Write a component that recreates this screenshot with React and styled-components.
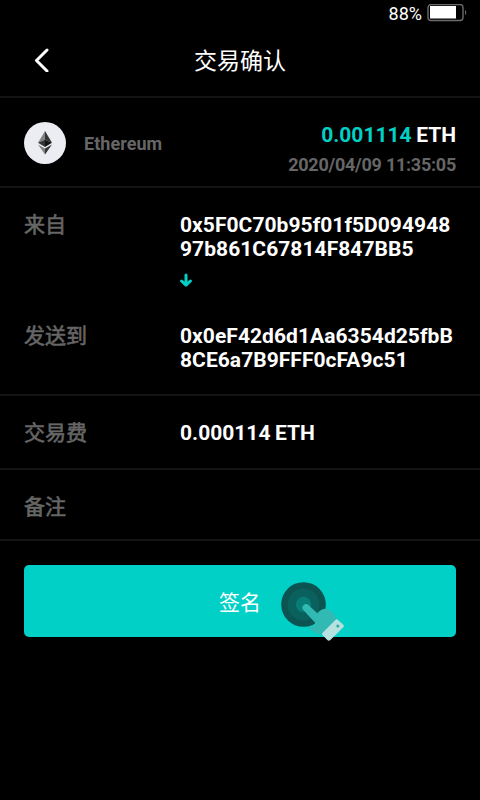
import React from "react";
import styled, { createGlobalStyle } from "styled-components";

const GlobalStyle = createGlobalStyle`
  body {
    margin: 0;
    background-color: #000;
    color: white;
    font-family: Roboto, "Noto Sans CJK SC", sans-serif;
  }
`;

const Screen = styled.div`
  width: 480px;
  min-height: 800px;
  overflow: hidden;
`;

const StatusBar = styled.div`
  display: flex;
  justify-content: flex-end;
  align-items: center;
  gap: 5px;
  height: 26px;
  padding-right: 12px;
  font-size: 18px;
  line-height: 26px;
`;

const Percent = styled.span`
  padding-top: 2px;
`;

const Header = styled.header`
  display: grid;
  grid-template-columns: 60px 1fr 60px;
  align-items: center;
  height: 70px;
  border-bottom: 2px solid #141414;
`;

const BackButton = styled.button`
  display: flex;
  padding: 0 0 2px 34px;
  border: none;
  background: none;
  color: white;
`;

const Title = styled.h1`
  margin: 0;
  padding-top: 1px;
  font-size: 23px;
  font-weight: 400;
  line-height: 34px;
  text-align: center;
`;

const Section = styled.section`
  display: flex;
  align-items: ${(props) => props.$align || "flex-start"};
  box-sizing: border-box;
  height: ${(props) => props.$height}px;
  padding: ${(props) => props.$padding || "0 24px"};
  border-bottom: 2px solid #141414;
`;

const Coin = styled.div`
  display: flex;
  align-items: center;
  justify-content: center;
  width: 42px;
  height: 42px;
  margin-right: 18px;
  border-radius: 50%;
  background-color: #ecedf2;
`;

const CoinName = styled.span`
  flex: 1;
  padding-top: 1px;
  color: #666;
  font-size: 18px;
  font-weight: 700;
  letter-spacing: 0.05px;
`;

const Summary = styled.div`
  padding-top: 14px;
  text-align: right;
  font-weight: 700;
`;

const Amount = styled.div`
  font-size: 21px;
  line-height: 30px;
  word-spacing: -0.7px;

  span {
    color: #00d0c6;
  }
`;

const Time = styled.div`
  color: #666;
  font-size: 18px;
  letter-spacing: -0.25px;
  line-height: 30px;
`;

const Transfer = styled.section`
  display: grid;
  grid-template-columns: 156px 1fr;
  grid-template-rows: 48px 63px 48px;
  box-sizing: border-box;
  height: 208px;
  padding: 25px 0 0 24px;
  border-bottom: 2px solid #141414;
`;

const Label = styled.span`
  width: 156px;
  color: #666;
  font-size: 21px;
  font-weight: 400;
  line-height: 24px;
  -webkit-text-stroke: 0.6px #666;
`;

const Value = styled.span`
  font-size: 21px;
  font-weight: 700;
  letter-spacing: ${(props) => (props.$address ? "0.05px" : "0")};
  line-height: 24px;
  word-spacing: -0.7px;
`;

const Arrow = styled.div`
  grid-column: 2;
  padding-top: 12px;
  line-height: 0;
`;

const SignButton = styled.button`
  position: relative;
  display: block;
  width: 432px;
  height: 72px;
  margin: 24px;
  padding: 2px 0 0;
  border: none;
  border-radius: 5px;
  background-color: #00d0c6;
  color: white;
  font-family: inherit;
  font-size: 21px;
  line-height: 72px;
`;

const TapHint = styled.svg`
  position: absolute;
  top: 5px;
  left: 241px;
`;

function Battery() {
  return (
    <svg width="41" height="18" viewBox="0 0 41 18">
      <rect x="1" y="0.5" width="35" height="16" rx="3" fill="none" stroke="#6b6b6b" strokeWidth="1.4" />
      <rect x="3" y="2" width="26" height="12.5" fill="white" />
      <path d="M38 6c1.6.6 1.6 4.4 0 5z" fill="#6b6b6b" />
    </svg>
  );
}

function EthereumLogo() {
  return (
    <svg width="14" height="24" viewBox="0 0 14 24">
      <path d="M7 0 0 11.8l7-3.1z" fill="#828384" />
      <path d="M7 0v8.7l7 3.1z" fill="#343434" />
      <path d="M0 11.8 7 16V8.7z" fill="#343434" />
      <path d="M14 11.8 7 16V8.7z" fill="#141414" />
      <path d="M0 13.5 7 23.5v-6z" fill="#828384" />
      <path d="M14 13.5 7 23.5v-6z" fill="#343434" />
    </svg>
  );
}

function Tap() {
  return (
    <TapHint width="90" height="80" viewBox="0 0 270 240">
      <circle cx="115.5" cy="103.5" r="67" fill="#0b5451" />
      <circle cx="115.5" cy="103.5" r="48" fill="#0a605c" />
      <circle cx="115.5" cy="103.5" r="23" fill="#087d77" />
      <path
        d="M115 120a10 10 0 0 1 16-14l26 24c9-12 21-16 33-12 9 4 19 15 26 28l-45 48c-16-4-31-9-42-21 10-2 17-6 22-14z"
        fill="#31b9b3"
      />
      <path
        d="M211 150q4-4 8 0l16 14q4 4 0 8l-39 38q-5 4-9 0l-14-14q-4-4 0-8z"
        fill="#b5e1df"
      />
      <circle cx="218.5" cy="168" r="4.5" fill="#31a8a3" />
    </TapHint>
  );
}

function App() {
  return (
    <Screen>
      <GlobalStyle />
      <StatusBar>
        <Percent>88%</Percent>
        <Battery />
      </StatusBar>
      <Header>
        <BackButton aria-label="返回">
          <svg width="16" height="24" viewBox="0 0 16 24">
            <path d="M13 2 2.5 12.5 13 23" fill="none" stroke="white" strokeWidth="3" strokeLinecap="round" strokeLinejoin="round" />
          </svg>
        </BackButton>
        <Title>交易确认</Title>
      </Header>
      <Section $height={90} $align="center" $padding="2px 24px 0">
        <Coin>
          <EthereumLogo />
        </Coin>
        <CoinName>Ethereum</CoinName>
        <Summary>
          <Amount>
            <span>0.001114</span> ETH
          </Amount>
          <Time>2020/04/09 11:35:05</Time>
        </Summary>
      </Section>
      <Transfer>
        <Label>来自</Label>
        <Value $address>
          0x5F0C70b95f01f5D094948
          <br />
          97b861C67814F847BB5
        </Value>
        <Arrow>
          <svg width="12" height="14" viewBox="0 0 12 14">
            <path d="M6 2v10M1.6 8 6 12.2 10.4 8" fill="none" stroke="#00d0c6" strokeWidth="3" strokeLinecap="round" strokeLinejoin="round" />
          </svg>
        </Arrow>
        <Label>发送到</Label>
        <Value $address>
          0x0eF42d6d1Aa6354d25fbB
          <br />
          8CE6a7B9FFF0cFA9c51
        </Value>
      </Transfer>
      <Section $height={74} $align="center" $padding="2px 24px 0">
        <Label>交易费</Label>
        <Value>0.000114 ETH</Value>
      </Section>
      <Section $height={71} $padding="25px 24px 0">
        <Label>备注</Label>
      </Section>
      <SignButton>
        签名
        <Tap />
      </SignButton>
    </Screen>
  );
}

export default App;
